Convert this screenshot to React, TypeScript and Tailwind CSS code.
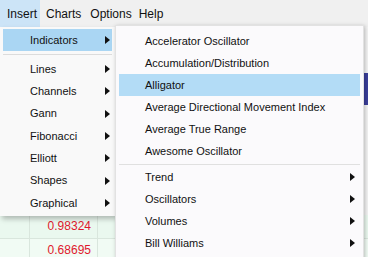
import React from 'react'

const mainItems = ['Lines', 'Channels', 'Gann', 'Fibonacci', 'Elliott', 'Shapes', 'Graphical']
const indicators = [
  'Accelerator Oscillator',
  'Accumulation/Distribution',
  'Alligator',
  'Average Directional Movement Index',
  'Average True Range',
  'Awesome Oscillator',
]
const groups = ['Trend', 'Oscillators', 'Volumes', 'Bill Williams']

function Arrow() {
  return (
    <svg width="5" height="8" viewBox="0 0 5 8" className="shrink-0">
      <path d="M0 0 L5 4 L0 8 Z" fill="#111" />
    </svg>
  )
}

export default function App() {
  return (
    <div
      className="relative w-[368px] h-[257px] overflow-hidden bg-[#f3f3f3] text-[11px] text-[#111]"
      style={{ fontFamily: '"Liberation Sans", Arial, sans-serif' }}
    >
      {/* menubar */}
      <div className="flex h-[27px] items-center bg-[#f0f0f0] text-[12px]">
        <div className="flex h-full w-[40px] items-center bg-[#cce4f7] pl-[7px]">Insert</div>
        <div className="pl-[6px] pr-[4px]">Charts</div>
        <div className="pl-[5px] pr-[3px]">Options</div>
        <div className="pl-[4px]">Help</div>
      </div>

      {/* window content behind the menus */}
      <div className="flex flex-col text-[12px]">
        <div className="h-[188px] bg-[#f3f3f3]" />
        <div className="flex h-[23px] bg-[#eaf8ef]">
          <div className="w-[30px] border-r border-[#d9e6dd]" />
          <div className="w-[68px] border-r border-[#d9e6dd] pr-[6px] text-right leading-[23px] text-[#e0182d]">0.98324</div>
        </div>
        <div className="flex h-[23px] bg-[#f1fbf4] border-t border-[#d9e6dd]">
          <div className="w-[30px] border-r border-[#d9e6dd]" />
          <div className="w-[68px] border-r border-[#d9e6dd] pr-[6px] text-right leading-[23px] text-[#e0182d]">0.68695</div>
        </div>
      </div>

      {/* bit of a blue element on the right edge */}
      <div className="absolute left-[364px] top-[73px] h-[32px] w-[4px] bg-[#3b3f9a]" />

      {/* Insert dropdown */}
      <div className="absolute left-0 top-[27px] w-[115px] bg-[#f9f9f9] py-[2px] shadow-[2px_3px_5px_rgba(0,0,0,0.25)]">
        <div className="mx-[3px] flex h-[22px] items-center justify-between bg-[#aad6f3] pl-[27px] pr-[2px]">
          <span>Indicators</span>
          <Arrow />
        </div>
        <div className="mx-[3px] my-[3px] h-px bg-[#dcdcdc]" />
        {mainItems.map((t) => (
          <div key={t} className="mx-[3px] flex h-[22.3px] items-center justify-between pl-[27px] pr-[2px]">
            <span>{t}</span>
            <Arrow />
          </div>
        ))}
      </div>

      {/* Indicators submenu */}
      <div className="absolute left-[115px] top-[25px] w-[249px] h-[240px] bg-[#fbfafc] py-[4px] shadow-[1px_1px_4px_rgba(0,0,0,0.25)] border border-[#e2e2e2]">
        {indicators.map((t) => (
          <div
            key={t}
            className={
              'mx-[3px] flex h-[22px] items-center pl-[26px] ' + (t === 'Alligator' ? 'bg-[#b3dcf6]' : '')
            }
          >
            {t}
          </div>
        ))}
        <div className="mx-[3px] mt-[2px] mb-[1px] h-px bg-[#e0e0e0]" />
        {groups.map((t) => (
          <div key={t} className="mx-[3px] flex h-[22px] items-center justify-between pl-[26px] pr-[5px]">
            <span>{t}</span>
            <Arrow />
          </div>
        ))}
      </div>
    </div>
  )
}
